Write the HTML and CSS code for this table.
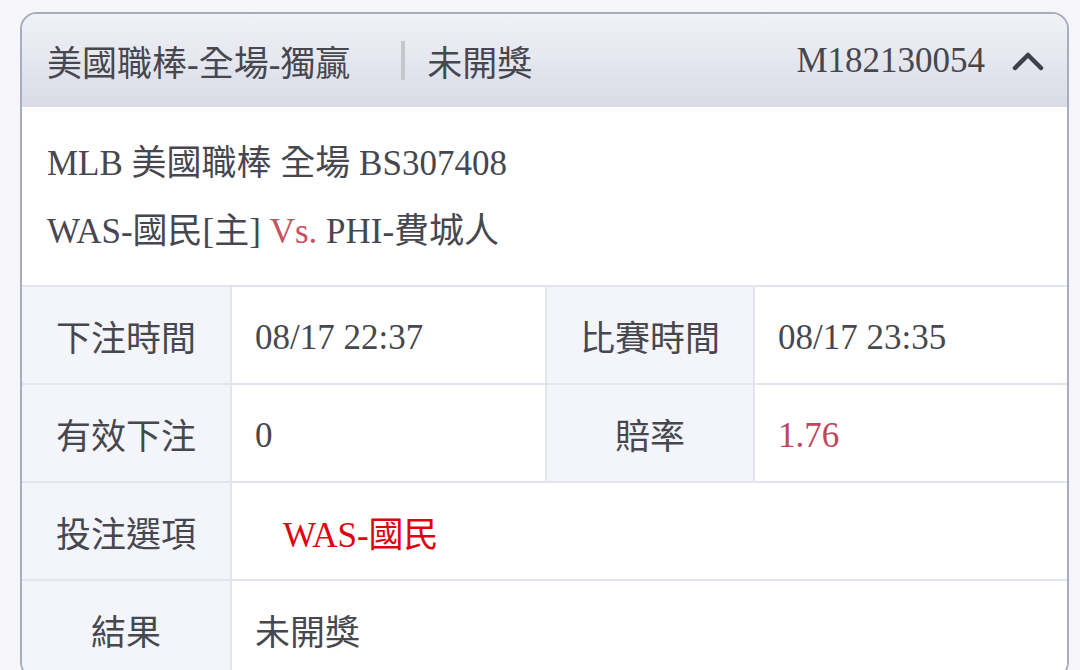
FILE: index.html
```html
<!DOCTYPE html>
<html lang="zh-Hant">
<head>
  <meta charset="UTF-8">
  <title>注單明細</title>
  <link rel="stylesheet" href="styles.css">
</head>
<body>
  <div class="card">
    <!-- 標題列 -->
    <div class="card-head">
      <span class="head-title">美國職棒-全場-獨贏</span>
      <span class="head-sep"></span>
      <span class="head-status">未開獎</span>
      <span class="head-code">M182130054</span>
      <svg class="chevron" width="34" height="22" viewBox="0 0 34 22">
        <polyline points="4,18 17,5 30,18" fill="none" stroke="#3d3f4a" stroke-width="4.5" stroke-linecap="round" stroke-linejoin="round"/>
      </svg>
    </div>

    <!-- 賽事資訊 -->
    <div class="match-info">
      <p>MLB 美國職棒 全場 BS307408</p>
      <p>WAS-國民[主] <span class="vs">Vs.</span> PHI-費城人</p>
    </div>

    <!-- 明細表 -->
    <div class="detail-grid">
      <div class="cell label">下注時間</div>
      <div class="cell value num">08/17 22:37</div>
      <div class="cell label">比賽時間</div>
      <div class="cell value num">08/17 23:35</div>

      <div class="cell label">有效下注</div>
      <div class="cell value num">0</div>
      <div class="cell label">賠率</div>
      <div class="cell value num odds">1.76</div>

      <div class="cell label">投注選項</div>
      <div class="cell value wide pick">WAS-國民</div>

      <div class="cell label">結果</div>
      <div class="cell value wide">未開獎</div>
    </div>
  </div>
</body>
</html>
```

FILE: styles.css
```css
body {
  font-family: "Liberation Serif", "Noto Sans CJK TC", serif;
  background-color: #f6f6f8;
  color: #46474f;
  margin: 0;
  padding: 12px 11px 0 20px;
}
.card {
  background-color: #ffffff;
  border: 2px solid #a9abc0;
  border-radius: 17px;
  overflow: hidden;
}
.card-head {
  display: flex;
  align-items: center;
  height: 93px;
  padding: 0 22px 0 25px;
  background: linear-gradient(#f1f2f7, #d9dbe6);
  font-size: 35px;
}
.head-sep {
  width: 4px;
  height: 39px;
  background-color: #c6c7cd;
  margin: 0 22px 0 51px;
}
.head-code {
  margin-left: auto;
  margin-right: 26px;
}
.chevron {
  display: block;
}
.match-info {
  padding: 23px 25px 19px;
  font-size: 35px;
}
.match-info p {
  margin: 0;
  line-height: 68px;
}
.vs {
  color: #c9505f;
}
/* 表格線用 gap 做 */
.detail-grid {
  display: grid;
  grid-template-columns: 208px 313px 206px 1fr;
  grid-auto-rows: 96px;
  gap: 2px;
  background-color: #e3e4f0;
  border-top: 2px solid #e3e4f0;
  font-size: 35px;
}
.cell {
  display: flex;
  align-items: center;
  background-color: #ffffff;
}
.label {
  justify-content: center;
  background-color: #f4f5fa;
}
.value {
  padding-left: 23px;
}
/* 純數字的格子往下一點，跟中文對齊 */
.num {
  padding-top: 5px;
}
.wide {
  grid-column: span 3;
}
.odds {
  color: #c0475b;
}
.pick {
  color: #e3000e;
  padding-left: 51px;
}
```
